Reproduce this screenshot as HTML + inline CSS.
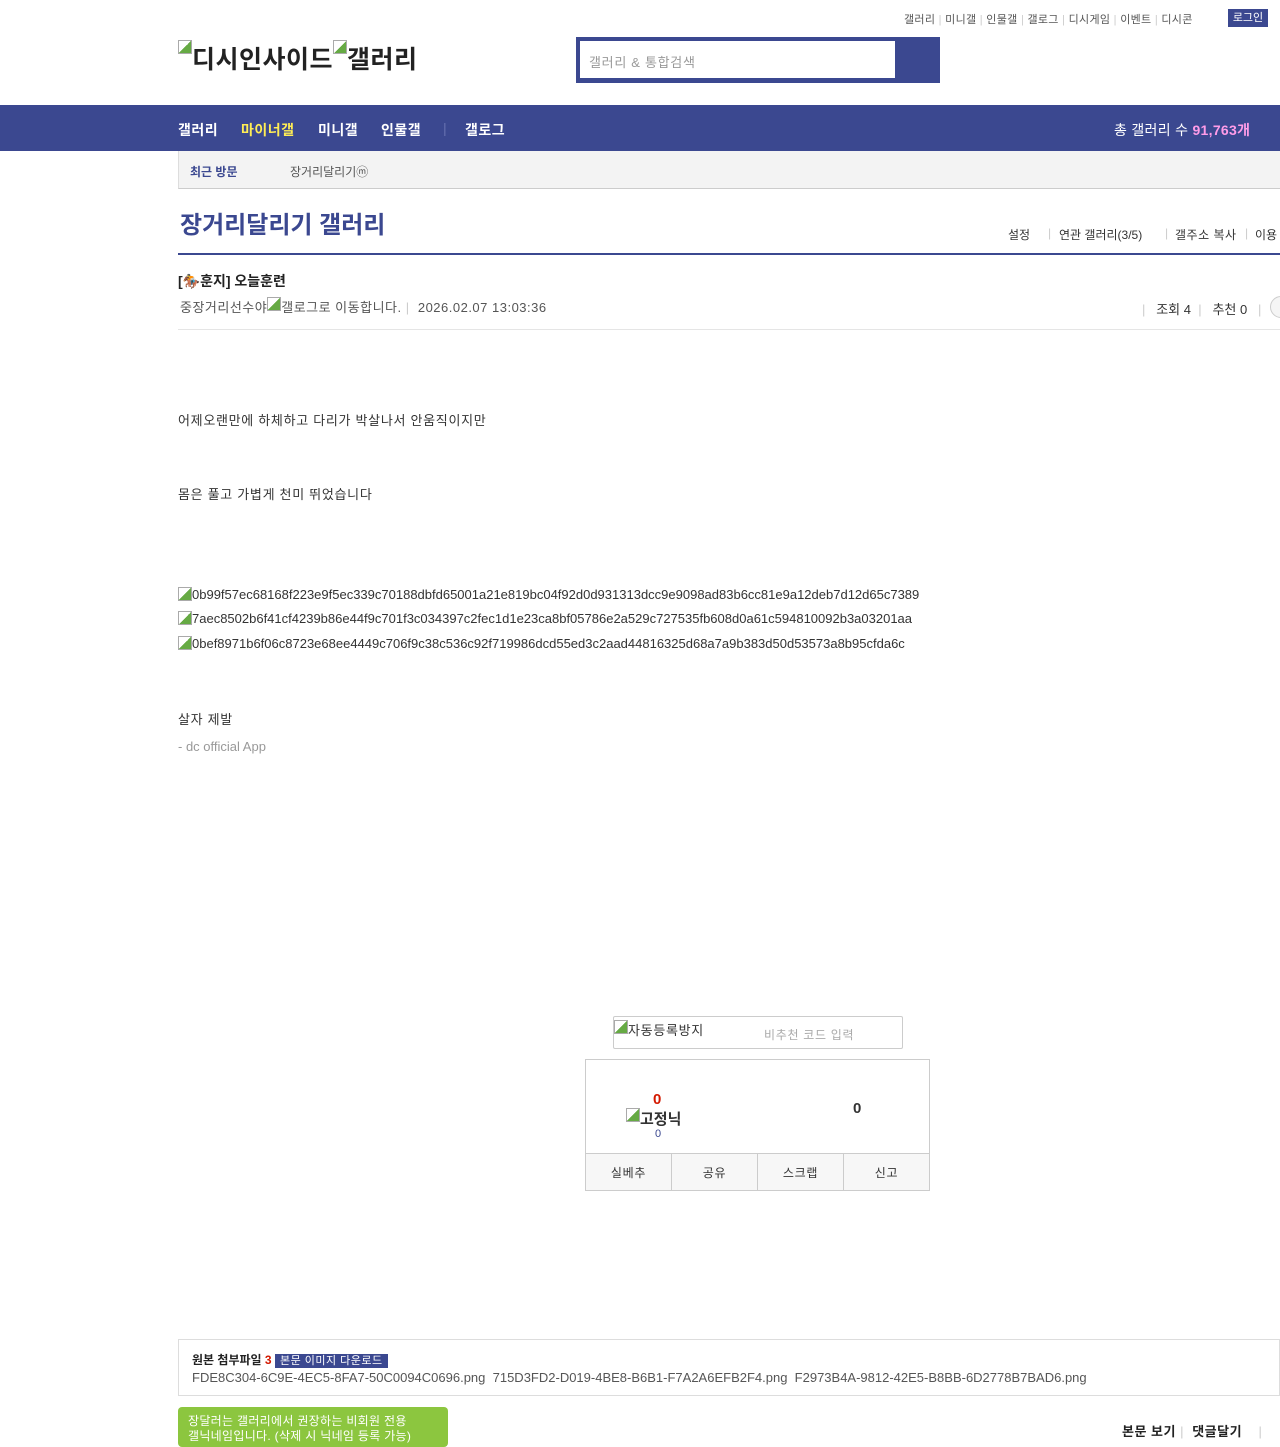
<!DOCTYPE html>
<html><head><meta charset="utf-8"><style>
*{margin:0;padding:0;box-sizing:border-box}
body{width:1280px;height:1440px;overflow:hidden;background:#fff;font-family:"Liberation Sans","Noto Sans CJK KR",sans-serif;color:#333;position:relative;font-size:13px}
.a{position:absolute;white-space:nowrap}
.ph{display:inline-block;width:14px;height:14px;border:1px solid #aaa;vertical-align:top;background:linear-gradient(135deg,#fff 50%,#6a4 50%)}
.ls{letter-spacing:0.7px}
.nv{position:absolute;top:120px;font-size:14px;font-weight:bold;color:#fff;letter-spacing:0.5px}
</style></head><body>
<div class="a" style="top:11px;left:904px;font-size:11px;color:#555;letter-spacing:0.3px">갤러리 <span style="color:#ccc">|</span> 미니갤 <span style="color:#ccc">|</span> 인물갤 <span style="color:#ccc">|</span> 갤로그 <span style="color:#ccc">|</span> 디시게임 <span style="color:#ccc">|</span> 이벤트 <span style="color:#ccc">|</span> 디시콘</div>
<div class="a" style="top:9px;left:1228px;width:40px;height:18px;background:#3b4890;color:#fff;font-size:11px;text-align:center;line-height:18px">로그인</div>
<div class="a" style="top:40px;left:178px;font-size:25px;font-weight:bold;color:#222;letter-spacing:0.5px"><span class="ph"></span>디시인사이드<span class="ph"></span>갤러리</div>
<div class="a" style="top:37px;left:576px;width:364px;height:46px;background:#3b4890"></div>
<div class="a ls" style="top:41px;left:580px;width:315px;height:37px;background:#fff;color:#999;font-size:13px;padding:11px 9px">갤러리 &amp; 통합검색</div>
<div class="a" style="top:105px;left:0;width:1280px;height:46px;background:#3b4890"></div>
<div class="nv" style="left:178px">갤러리</div>
<div class="nv" style="left:241px;color:#ffed55">마이너갤</div>
<div class="nv" style="left:318px">미니갤</div>
<div class="nv" style="left:381px">인물갤</div>
<div class="nv" style="left:443px;color:#6670b0;font-weight:normal">|</div>
<div class="nv" style="left:465px">갤로그</div>
<div class="a" style="top:120px;left:1114px;font-size:14px;color:#fff;letter-spacing:0.3px">총 갤러리 수 <b style="color:#ff9ce8">91,763개</b></div>
<div class="a" style="top:151px;left:178px;width:1102px;height:38px;background:#f3f3f3;border-bottom:1px solid #ccc;border-left:1px solid #ddd"></div>
<div class="a" style="top:163px;left:190px;font-size:12px;font-weight:bold;color:#3b4890">최근 방문</div>
<div class="a" style="top:163px;left:290px;font-size:12px;color:#555">장거리달리기ⓜ</div>
<div class="a" style="top:205px;left:180px;font-size:24px;font-weight:bold;color:#3b4890">장거리달리기 갤러리</div>
<div class="a" style="top:226px;left:1008px;font-size:12px">설정</div>
<div class="a" style="top:226px;left:1048px;font-size:12px;color:#ccc">|</div>
<div class="a" style="top:226px;left:1059px;font-size:12px">연관 갤러리(3/5)</div>
<div class="a" style="top:226px;left:1165px;font-size:12px;color:#ccc">|</div>
<div class="a" style="top:226px;left:1175px;font-size:12px;letter-spacing:0.5px">갤주소 복사</div>
<div class="a" style="top:226px;left:1245px;font-size:12px;color:#ccc">|</div>
<div class="a" style="top:226px;left:1255px;font-size:12px">이용</div>
<div class="a" style="top:253px;left:178px;width:1102px;height:2px;background:#3b4890"></div>
<div class="a" style="top:271px;left:178px;font-size:14px;font-weight:bold;color:#222">[🏇훈지] 오늘훈련</div>
<div class="a" style="top:297px;left:180px;font-size:13px;color:#555;letter-spacing:0.5px">중장거리선수야<span class="ph"></span>갤로그로 이동합니다. <span style="color:#ccc">|</span> &nbsp;2026.02.07 13:03:36</div>
<div class="a" style="top:299px;left:1142px;font-size:13px;color:#333"><span style="color:#ccc">|</span> &nbsp;&nbsp;조회 4 &nbsp;<span style="color:#ccc">|</span> &nbsp;&nbsp;추천 0 &nbsp;&nbsp;<span style="color:#ccc">|</span></div>
<div class="a" style="top:296px;left:1270px;width:22px;height:22px;border:1px solid #ccc;border-radius:50%;background:#f5f5f5"></div>
<div class="a" style="top:329px;left:178px;width:1102px;height:1px;background:#e5e5e5"></div>
<div class="a ls" style="top:410px;left:178px">어제오랜만에 하체하고 다리가 박살나서 안움직이지만</div>
<div class="a ls" style="top:484px;left:178px">몸은 풀고 가볍게 천미 뛰었습니다</div>
<div class="a" style="top:587px;left:178px"><span class="ph"></span>0b99f57ec68168f223e9f5ec339c70188dbfd65001a21e819bc04f92d0d931313dcc9e9098ad83b6cc81e9a12deb7d12d65c7389</div>
<div class="a" style="top:611px;left:178px"><span class="ph"></span>7aec8502b6f41cf4239b86e44f9c701f3c034397c2fec1d1e23ca8bf05786e2a529c727535fb608d0a61c594810092b3a03201aa</div>
<div class="a" style="top:636px;left:178px"><span class="ph"></span>0bef8971b6f06c8723e68ee4449c706f9c38c536c92f719986dcd55ed3c2aad44816325d68a7a9b383d50d53573a8b95cfda6c</div>
<div class="a ls" style="top:709px;left:178px">살자 제발</div>
<div class="a" style="top:739px;left:178px;color:#999">- dc official App</div>
<div class="a" style="top:1016px;left:613px;width:290px;height:33px;border:1px solid #ccc;border-radius:2px"></div>
<div class="a ls" style="top:1020px;left:614px;font-size:13px"><span class="ph"></span>자동등록방지</div>
<div class="a ls" style="top:1026px;left:764px;font-size:12px;color:#aaa">비추천 코드 입력</div>
<div class="a" style="top:1059px;left:585px;width:345px;height:132px;border:1px solid #ccc"></div>
<div class="a" style="top:1091px;left:653px;font-size:15px;font-weight:bold;color:#d31900">0</div>
<div class="a" style="top:1108px;left:626px;font-size:15px;font-weight:bold"><span class="ph"></span>고정닉</div>
<div class="a" style="top:1128px;left:655px;font-size:11px;color:#3b4890">0</div>
<div class="a" style="top:1100px;left:853px;font-size:15px;font-weight:bold">0</div>
<div class="a" style="top:1153px;left:586px;width:343px;height:37px;border-top:1px solid #ccc;background:#f7f7f7;display:flex;font-size:12px;letter-spacing:0.7px">
<div style="flex:1;border-right:1px solid #ccc;text-align:center;line-height:38px">실베추</div><div style="flex:1;border-right:1px solid #ccc;text-align:center;line-height:38px">공유</div><div style="flex:1;border-right:1px solid #ccc;text-align:center;line-height:38px">스크랩</div><div style="flex:1;text-align:center;line-height:38px">신고</div></div>
<div class="a" style="top:1339px;left:178px;width:1102px;height:57px;border:1px solid #ddd"></div>
<div class="a" style="top:1351px;left:192px;font-size:12px;font-weight:bold;color:#222">원본 첨부파일 <span style="color:#d31900">3</span> <span style="background:#3b4890;color:#fff;font-weight:normal;font-size:11px;padding:1px 5px;letter-spacing:0.5px">본문 이미지 다운로드</span></div>
<div class="a" style="top:1370px;left:192px;font-size:13px;color:#555">FDE8C304-6C9E-4EC5-8FA7-50C0094C0696.png &nbsp;715D3FD2-D019-4BE8-B6B1-F7A2A6EFB2F4.png &nbsp;F2973B4A-9812-42E5-B8BB-6D2778B7BAD6.png</div>
<div class="a" style="top:1421px;left:1122px;font-size:13px;font-weight:bold;color:#222;letter-spacing:0.5px">본문 보기 <span style="color:#ccc;font-weight:normal">|</span> &nbsp;댓글달기 &nbsp;&nbsp;&nbsp;<span style="color:#ccc;font-weight:normal">|</span></div>
<div class="a" style="top:1407px;left:178px;width:270px;height:40px;background:#8cc63f;border-radius:4px;color:#fff;font-size:12px;padding:7px 10px;line-height:15px;letter-spacing:0.3px">장달러는 갤러리에서 권장하는 비회원 전용<br>갤닉네임입니다. (삭제 시 닉네임 등록 가능)</div>
</body></html>
